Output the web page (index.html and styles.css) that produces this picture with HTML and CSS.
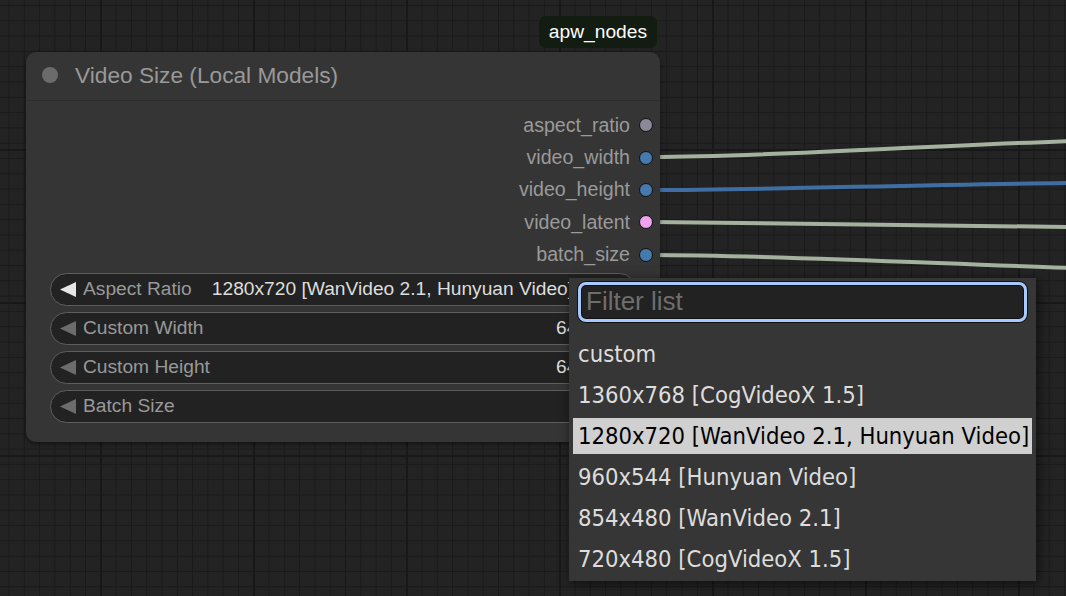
FILE: index.html
```html
<!DOCTYPE html>
<html>
<head>
<meta charset="utf-8">
<link rel="stylesheet" href="styles.css">
</head>
<body>
<div class="canvas">
  <svg class="links" width="1066" height="596" viewBox="0 0 1066 596">
    <path class="link green" d="M652 157 C 760 157, 900 147, 1070 141"/>
    <path class="link blue" d="M652 190 C 760 190, 900 185, 1070 183"/>
    <path class="link green" d="M652 222 C 760 222, 900 225, 1070 227"/>
    <path class="link green" d="M652 255 C 760 255, 900 262, 1070 268"/>
  </svg>

  <div class="node">
    <div class="badge">apw_nodes</div>
    <div class="title">
      <span class="title-dot"></span>
      <span class="title-text">Video Size (Local Models)</span>
    </div>
    <div class="outputs">
      <div class="slot"><span>aspect_ratio</span><i class="sdot c-gray"></i></div>
      <div class="slot"><span>video_width</span><i class="sdot c-blue"></i></div>
      <div class="slot"><span>video_height</span><i class="sdot c-blue"></i></div>
      <div class="slot"><span>video_latent</span><i class="sdot c-pink"></i></div>
      <div class="slot"><span>batch_size</span><i class="sdot c-blue"></i></div>
    </div>
    <div class="widgets">
      <div class="widget">
        <svg class="arrow active" width="16" height="15" viewBox="0 0 16 15"><polygon points="16,0 16,15 0,7.5"/></svg>
        <span class="wlabel">Aspect Ratio</span>
        <span class="wvalue combo">1280x720 [WanVideo 2.1, Hunyuan Video]</span>
      </div>
      <div class="widget">
        <svg class="arrow" width="16" height="15" viewBox="0 0 16 15"><polygon points="16,0 16,15 0,7.5"/></svg>
        <span class="wlabel">Custom Width</span>
        <span class="wvalue num">640</span>
      </div>
      <div class="widget">
        <svg class="arrow" width="16" height="15" viewBox="0 0 16 15"><polygon points="16,0 16,15 0,7.5"/></svg>
        <span class="wlabel">Custom Height</span>
        <span class="wvalue num">640</span>
      </div>
      <div class="widget">
        <svg class="arrow" width="16" height="15" viewBox="0 0 16 15"><polygon points="16,0 16,15 0,7.5"/></svg>
        <span class="wlabel">Batch Size</span>
        <span class="wvalue num">1</span>
      </div>
    </div>
  </div>

  <div class="menu">
    <input class="filter" type="text" placeholder="Filter list">
    <div class="items">
      <div class="item">custom</div>
      <div class="item">1360x768 [CogVideoX 1.5]</div>
      <div class="item selected">1280x720 [WanVideo 2.1, Hunyuan Video]</div>
      <div class="item">960x544 [Hunyuan Video]</div>
      <div class="item">854x480 [WanVideo 2.1]</div>
      <div class="item">720x480 [CogVideoX 1.5]</div>
    </div>
  </div>
</div>
</body>
</html>
```

FILE: styles.css
```css
html, body {
  margin: 0;
  padding: 0;
  width: 1066px;
  height: 596px;
  overflow: hidden;
  background: #222;
}

.canvas {
  position: relative;
  width: 1066px;
  height: 596px;
  background-color: #232323;
  background-image:
    linear-gradient(to right, #181818 2px, transparent 2px),
    linear-gradient(to bottom, #181818 2px, transparent 2px),
    linear-gradient(to right, #1a1a1a 1px, transparent 1px),
    linear-gradient(to bottom, #1a1a1a 1px, transparent 1px);
  background-size: 153px 153px, 153px 153px, 15.3px 15.3px, 15.3px 15.3px;
  background-position: -53px 0, 0 -4px, 8.5px 0, 0 5px;
  font-family: "Liberation Sans", Arial, sans-serif;
}

.links {
  position: absolute;
  left: 0;
  top: 0;
}

.link {
  fill: none;
  stroke-width: 4;
}
.link.green { stroke: #a3b19e; }
.link.blue { stroke: #3f6ea3; }

/* Node */
.node {
  position: absolute;
  left: 26px;
  top: 52px;
  width: 634px;
  height: 390px;
  box-sizing: border-box;
  background: #353535;
  border-radius: 10px;
  box-shadow: 0 2px 4px rgba(0, 0, 0, 0.45);
  display: flex;
  flex-direction: column;
}

.badge {
  position: absolute;
  right: 3px;
  top: -36px;
  height: 32px;
  padding: 0 10px;
  background: #131c10;
  color: #ffffff;
  border-radius: 7px;
  font-size: 19.2px;
  line-height: 32px;
}

.title {
  height: 48px;
  display: flex;
  align-items: center;
  border-bottom: 1px solid #2c2c2c;
  padding-left: 16px;
}

.title-dot {
  width: 16px;
  height: 16px;
  border-radius: 50%;
  background: #6b6b6b;
  margin-right: 17px;
  margin-top: -2px;
}

.title-text {
  color: #999999;
  font-size: 22.7px;
  margin-top: -1px;
}

.outputs {
  padding-top: 9px;
  display: flex;
  flex-direction: column;
}

.slot {
  height: 32.4px;
  display: flex;
  align-items: center;
  justify-content: flex-end;
  padding-right: 7px;
  color: #9a9a9a;
  font-size: 19.6px;
}

.slot span {
  margin-right: 9px;
  margin-top: -2px;
}

.sdot {
  display: block;
  width: 12px;
  height: 12px;
  border-radius: 50%;
  border: 1.5px solid #111;
  margin-top: -2px;
}
.c-gray { background: #8b8998; }
.c-blue { background: #4679ac; }
.c-pink { background: #f0a2f0; }

.widgets {
  margin-top: 1px;
  padding: 0 24px;
  display: flex;
  flex-direction: column;
  gap: 6px;
}

.widget {
  height: 33px;
  box-sizing: border-box;
  border: 1px solid #5e5e5e;
  border-radius: 17px;
  background: #222222;
  display: flex;
  align-items: center;
  padding-left: 9px;
  font-size: 19.2px;
  white-space: nowrap;
  overflow: hidden;
}

.arrow {
  flex: none;
  fill: #6c6c6c;
}
.arrow.active { fill: #e6e6e6; }

.wlabel {
  color: #999999;
  margin-left: 7px;
}

.wvalue {
  color: #dddddd;
}
.wvalue.combo {
  margin-left: 20px;
}
.wvalue.num {
  margin-left: auto;
  margin-right: 47px;
}

/* Dropdown menu */
.menu {
  position: absolute;
  left: 569px;
  top: 278px;
  width: 467px;
  height: 303px;
  box-sizing: border-box;
  padding: 4px;
  background: #363636;
  box-shadow: 2px 2px 10px rgba(0, 0, 0, 0.6);
  display: flex;
  flex-direction: column;
}

.filter {
  margin: 0 5px;
  height: 40px;
  box-sizing: border-box;
  background: #222222;
  border: 3px solid #a7c9fc;
  border-radius: 8px;
  box-shadow: 0 0 0 1px #111111, inset 0 0 0 1px #111111;
  outline: none;
  padding: 0 0 2px 5px;
  font-family: "Liberation Sans", Arial, sans-serif;
  font-size: 26px;
  color: #dddddd;
}
.filter::placeholder {
  color: #6e6e6e;
}

.items {
  margin-top: 14px;
  display: flex;
  flex-direction: column;
  gap: 5px;
}

.item {
  height: 36px;
  line-height: 36px;
  padding-left: 5px;
  color: #dddddd;
  font-family: "DejaVu Sans Condensed", "DejaVu Sans", sans-serif;
  font-size: 23.6px;
  white-space: nowrap;
}

.item.selected {
  background: #d0d0d0;
  color: #000000;
}
```
